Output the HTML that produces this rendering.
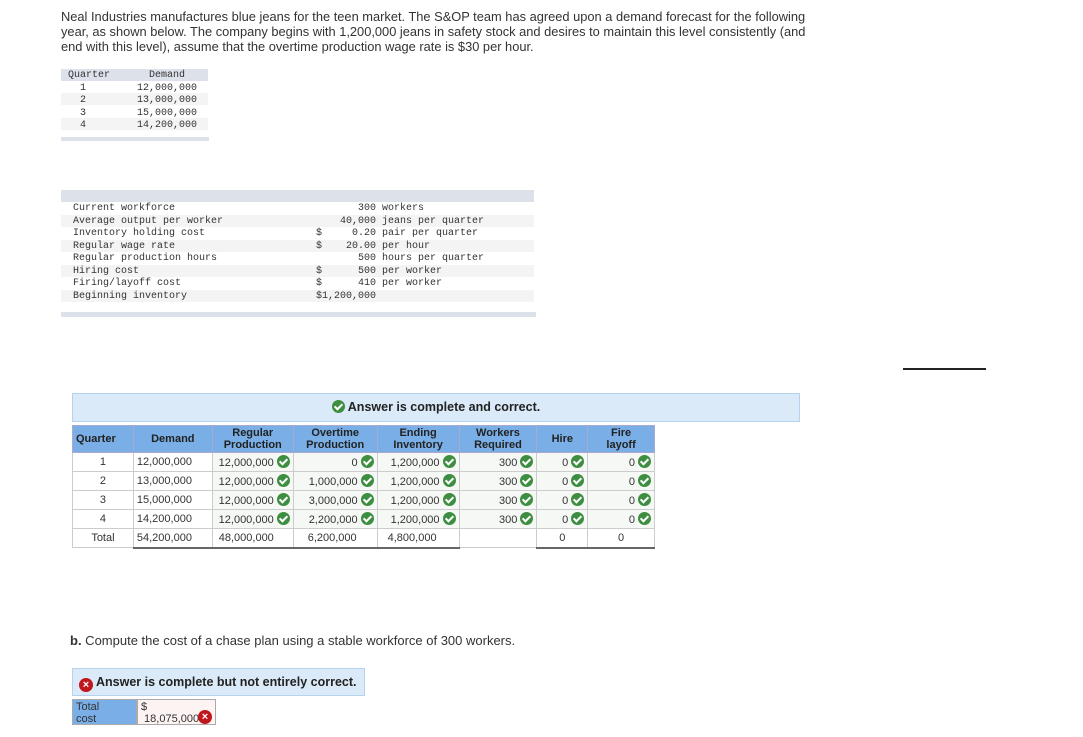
<!DOCTYPE html>
<html><head><style>
*{margin:0;padding:0;box-sizing:border-box}
body{width:1083px;height:737px;background:#fff;font-family:"Liberation Sans",sans-serif;color:#333;position:relative;overflow:hidden}
.a{position:absolute}
.mono{font-family:"Liberation Mono",monospace;font-size:10px;color:#333}
.intro{left:61px;top:9px;width:760px;font-size:12.85px;line-height:15px;color:#333}
.ck{display:inline-block;width:13px;height:13px;border-radius:50%;background:#3e8e41;vertical-align:-2px;margin-left:3px;position:relative}
.ck:after{content:"";position:absolute;left:4px;top:2px;width:3px;height:6px;border:solid #fff;border-width:0 2px 2px 0;transform:rotate(45deg)}
.x{display:inline-block;width:14px;height:14px;border-radius:50%;background:#c0171d;color:#fff;font-size:11px;font-weight:bold;text-align:center;line-height:14px;vertical-align:-2px}
table.t{border-collapse:collapse;font-size:11px;color:#333}
table.t td,table.t th{height:19px;border:1px solid #ccc;padding:0 3px;white-space:nowrap}
table.t th{background:#7aaee6;color:#222;font-weight:bold;line-height:12px;height:27px;border-color:#aac}
.r{text-align:right}.c{text-align:center}
.g{background:#f5f8f5}
</style></head><body>
<div class="a intro">Neal Industries manufactures blue jeans for the teen market. The S&amp;OP team has agreed upon a demand forecast for the following year, as shown below. The company begins with 1,200,000 jeans in safety stock and desires to maintain this level consistently (and end with this level), assume that the overtime production wage rate is $30 per hour.</div>

<div class="a" style="left:61px;top:69px;width:147px;height:12px;background:#dde1e9"></div>
<div class="a" style="left:61px;top:93px;width:147px;height:12px;background:#f4f4f4"></div>
<div class="a" style="left:61px;top:118px;width:147px;height:12px;background:#f4f4f4"></div>
<div class="a mono" style="left:68px;top:70px;line-height:12.5px">Quarter<br>&nbsp;&nbsp;1<br>&nbsp;&nbsp;2<br>&nbsp;&nbsp;3<br>&nbsp;&nbsp;4</div>
<div class="a mono" style="left:137px;top:70px;line-height:12.5px">&nbsp;&nbsp;Demand<br>12,000,000<br>13,000,000<br>15,000,000<br>14,200,000</div>
<div class="a" style="left:61px;top:137px;width:148px;height:4px;background:#dde1e9"></div>

<div class="a" style="left:61px;top:190px;width:473px;height:12px;background:#dde1e9"></div>
<div class="a" style="left:61px;top:215px;width:473px;height:12px;background:#f4f4f4"></div>
<div class="a" style="left:61px;top:240px;width:473px;height:12px;background:#f4f4f4"></div>
<div class="a" style="left:61px;top:265px;width:473px;height:12px;background:#f4f4f4"></div>
<div class="a" style="left:61px;top:290px;width:473px;height:12px;background:#f4f4f4"></div>
<div class="a mono" style="left:73px;top:203px;line-height:12.5px;white-space:pre">Current workforce
Average output per worker
Inventory holding cost
Regular wage rate
Regular production hours
Hiring cost
Firing/layoff cost
Beginning inventory</div>
<div class="a mono" style="left:316px;top:203px;line-height:12.5px;white-space:pre">       300 workers
    40,000 jeans per quarter
$     0.20 pair per quarter
$    20.00 per hour
       500 hours per quarter
$      500 per worker
$      410 per worker
$1,200,000</div>
<div class="a" style="left:61px;top:312px;width:475px;height:5px;background:#dde1e9"></div>

<div class="a" style="left:903px;top:368px;width:83px;height:2px;background:#222"></div>

<div class="a" style="left:72px;top:393px;width:728px;height:29px;background:#dbeaf8;border:1px solid #b5d3ee;text-align:center;font-weight:bold;font-size:12.5px;line-height:27px;color:#222"><span class="ck" style="margin:0 3px 0 0"></span>Answer is complete and correct.</div>

<table class="t a" style="left:72px;top:425px;width:583px">
<colgroup><col style="width:61px"><col style="width:79px"><col style="width:81px"><col style="width:84px"><col style="width:82px"><col style="width:78px"><col style="width:51px"><col style="width:67px"></colgroup>
<tr><th style="text-align:left">Quarter</th><th>Demand</th><th>Regular<br>Production</th><th>Overtime<br>Production</th><th>Ending<br>Inventory</th><th>Workers<br>Required</th><th>Hire</th><th>Fire<br>layoff</th></tr>
<tr><td class="c">1</td><td>12,000,000</td><td class="r g">12,000,000<span class="ck"></span></td><td class="r g">0<span class="ck"></span></td><td class="r g">1,200,000<span class="ck"></span></td><td class="r g">300<span class="ck"></span></td><td class="r g">0<span class="ck"></span></td><td class="r g">0<span class="ck"></span></td></tr>
<tr><td class="c">2</td><td>13,000,000</td><td class="r g">12,000,000<span class="ck"></span></td><td class="r g">1,000,000<span class="ck"></span></td><td class="r g">1,200,000<span class="ck"></span></td><td class="r g">300<span class="ck"></span></td><td class="r g">0<span class="ck"></span></td><td class="r g">0<span class="ck"></span></td></tr>
<tr><td class="c">3</td><td>15,000,000</td><td class="r g">12,000,000<span class="ck"></span></td><td class="r g">3,000,000<span class="ck"></span></td><td class="r g">1,200,000<span class="ck"></span></td><td class="r g">300<span class="ck"></span></td><td class="r g">0<span class="ck"></span></td><td class="r g">0<span class="ck"></span></td></tr>
<tr><td class="c">4</td><td>14,200,000</td><td class="r g">12,000,000<span class="ck"></span></td><td class="r g">2,200,000<span class="ck"></span></td><td class="r g">1,200,000<span class="ck"></span></td><td class="r g">300<span class="ck"></span></td><td class="r g">0<span class="ck"></span></td><td class="r g">0<span class="ck"></span></td></tr>
<tr><td class="c">Total</td><td style="border-bottom:2px solid #666">54,200,000</td><td style="padding-left:6px;border-bottom:2px solid #666">48,000,000</td><td style="padding-left:14px;border-bottom:2px solid #666">6,200,000</td><td style="padding-left:10px;border-bottom:2px solid #666">4,800,000</td><td></td><td class="c" style="border-bottom:2px solid #666">0</td><td class="c" style="border-bottom:2px solid #666">0</td></tr>
</table>

<div class="a" style="left:70px;top:633px;font-size:13px;color:#333"><b>b.</b> Compute the cost of a chase plan using a stable workforce of 300 workers.</div>

<div class="a" style="left:72px;top:668px;width:293px;height:28px;background:#dbeaf8;border:1px solid #b5d3ee;font-weight:bold;font-size:12.5px;line-height:26px;color:#222;padding-left:6px"><span class="x" style="margin-right:3px">×</span>Answer is complete but not entirely correct.</div>
<div class="a" style="left:72px;top:699px;width:65px;height:26px;background:#7aaee6;border:1px solid #aaa;font-size:11px;line-height:12px;padding:1px 3px;color:#333">Total<br>cost</div>
<div class="a" style="left:137px;top:699px;width:79px;height:26px;background:#fdf3f3;border:1px solid #aaa;font-size:11px;line-height:12px;padding:1px 3px;color:#333">$<br>&nbsp;18,075,000</div>
<div class="a" style="left:198px;top:705px"><span class="x">×</span></div>
</body></html>
